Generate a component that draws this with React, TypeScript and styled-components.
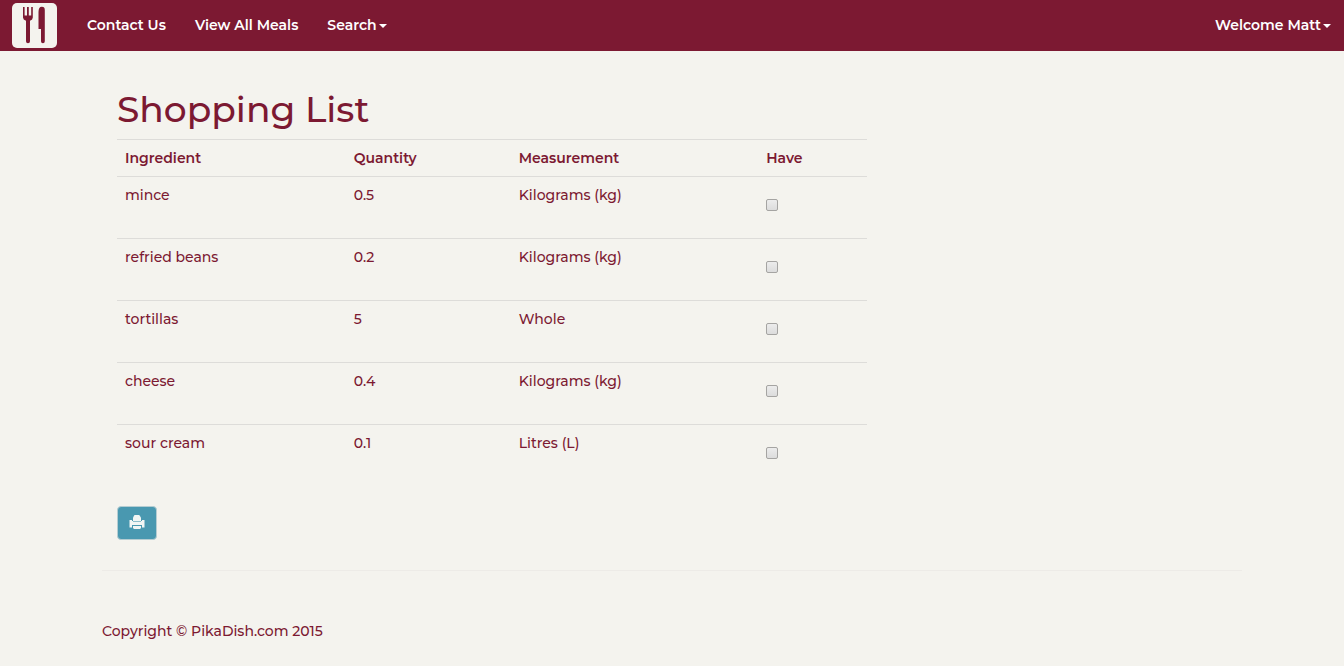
import React from "react";
import styled, { createGlobalStyle } from "styled-components";

const wine = "#7c1932";
const paper = "#f4f3ee";

const GlobalStyle = createGlobalStyle`
  *, *::before, *::after { box-sizing: border-box; }
  body {
    margin: 0;
    background: ${paper};
    color: ${wine};
    font-family: Montserrat, Inter, "Liberation Sans", sans-serif;
    font-size: 14px;
    font-weight: 500;
    line-height: 20px;
  }
`;

const Navbar = styled.nav`
  display: flex;
  align-items: center;
  height: 51px;
  padding: 0 13px 0 12px;
  background: ${wine};
`;

const Brand = styled.a`
  display: block;
  width: 45px;
  height: 45px;
  margin-right: 30px;
  border-radius: 5px;
  background: ${paper};

  svg { display: block; }
`;

const NavList = styled.ul`
  display: flex;
  flex: 1;
  gap: 29px;
  margin: 0;
  padding: 0;
  list-style: none;
`;

const navItem = `
  display: flex;
  align-items: center;
  gap: 2px;
  padding: 0 0 2px;
  border: 0;
  background: none;
  color: #fff;
  font: inherit;
  font-weight: 600;
  white-space: nowrap;
  text-decoration: none;
  cursor: pointer;
`;

const NavLink = styled.a`${navItem}`;
const NavMenuButton = styled.button`${navItem}`;

const Caret = styled.span`
  margin-top: 2px;
  border-top: 4px solid currentColor;
  border-left: 4px solid transparent;
  border-right: 4px solid transparent;
`;

const Container = styled.div`
  width: 100%;
  max-width: 1170px;
  margin: 0 auto;
  padding: 0 15px;
`;

const ListSection = styled.main`
  max-width: 780px;
  padding: 38px 15px 0;
`;

const Title = styled.h1`
  margin: 0 0 10px;
  font-size: 36px;
  font-weight: 500;
  line-height: 40px;
`;

const Table = styled.table`
  width: 100%;
  margin-bottom: 20px;
  border-collapse: separate;
  border-spacing: 0;
  table-layout: fixed;
`;

const Column = styled.col<{ $width: string }>`
  width: ${({ $width }) => $width};
`;

const HeadCell = styled.th`
  padding: 8px;
  border-top: 1px solid #dddcd9;
  font-weight: 600;
  text-align: left;
`;

const Cell = styled.td`
  padding: 8px;
  border-top: 1px solid #dddcd9;
  vertical-align: top;
`;

const CheckField = styled.label`
  display: block;
  height: 45px;
  padding-top: 14px;
`;

const Checkbox = styled.input`
  appearance: none;
  display: block;
  width: 12px;
  height: 12px;
  margin: 0;
  border: 1px solid #a5a4a2;
  border-radius: 2px;
  background: linear-gradient(#ececec, #dcdcdc);

  &:checked { background: ${wine}; }
`;

const PrintButton = styled.button`
  display: flex;
  align-items: center;
  justify-content: center;
  width: 40px;
  height: 34px;
  padding: 0;
  border: 1px solid #b5cdd2;
  border-radius: 4px;
  background: #4998b0;
  color: #fff;
  cursor: pointer;
`;

const Divider = styled.hr`
  width: 100%;
  margin: 30px 0 50px;
  border: 0;
  border-top: 1px solid #edebe7;
`;

const Footer = styled.footer`
  padding-bottom: 24px;
`;

const items = [
  { name: "mince", quantity: "0.5", unit: "Kilograms (kg)" },
  { name: "refried beans", quantity: "0.2", unit: "Kilograms (kg)" },
  { name: "tortillas", quantity: "5", unit: "Whole" },
  { name: "cheese", quantity: "0.4", unit: "Kilograms (kg)" },
  { name: "sour cream", quantity: "0.1", unit: "Litres (L)" },
];

const CutleryLogo = () => (
  <svg width="45" height="45" viewBox="0 0 45 45" fill={wine} aria-hidden="true">
    <path d="M11 4h1.600v8.500h2.400V4h1.800v8.500h2.400V4h1.600v10.500q0 2.300-2.800 3.200v20.500a2 2 0 0 1-4 0V17.700q-3-.9-3-3.200z" />
    <path d="M26.500 9q0-5.200 3.400-5.200 2.900 0 2.900 3.200v31.300a1.900 1.900 0 0 1-3.800 0V26h-2.500z" />
  </svg>
);

const PrintIcon = () => (
  <svg width="16" height="16" viewBox="0 0 16 16" aria-hidden="true">
    <path fill="#f1f5f4" d="M4 2.500L5.500 0h4.700L12 2.500V6H4z" />
    <path fill="#f1f5f4" d="M.5 5H3v2h10V5h2.500v7.500H13V10H3v2.500H.5z" />
    <path fill="#f1f5f4" d="M3 6h10v4H3z" />
    <path fill="#8ebdc9" d="M4 6h8v1H4z" />
    <path fill="#f1f5f4" d="M4 11h8v2l-1 1H5l-1-1z" />
  </svg>
);

export default function App() {
  return (
    <>
      <GlobalStyle />
      <Navbar>
        <Brand href="#" aria-label="PikaDish home"><CutleryLogo /></Brand>
        <NavList>
          <li><NavLink href="#contact">Contact Us</NavLink></li>
          <li><NavLink href="#meals">View All Meals</NavLink></li>
          <li><NavMenuButton type="button">Search<Caret /></NavMenuButton></li>
        </NavList>
        <NavMenuButton type="button">Welcome Matt<Caret /></NavMenuButton>
      </Navbar>
      <Container>
        <ListSection>
          <Title>Shopping List</Title>
          <Table>
            <colgroup>
              <Column $width="30.5%" />
              <Column $width="22%" />
              <Column $width="33%" />
              <Column $width="14.5%" />
            </colgroup>
            <thead>
              <tr>
                <HeadCell scope="col">Ingredient</HeadCell>
                <HeadCell scope="col">Quantity</HeadCell>
                <HeadCell scope="col">Measurement</HeadCell>
                <HeadCell scope="col">Have</HeadCell>
              </tr>
            </thead>
            <tbody>
              {items.map((item) => (
                <tr key={item.name}>
                  <Cell>{item.name}</Cell>
                  <Cell>{item.quantity}</Cell>
                  <Cell>{item.unit}</Cell>
                  <Cell>
                    <CheckField>
                      <Checkbox type="checkbox" aria-label={`Have ${item.name}`} />
                    </CheckField>
                  </Cell>
                </tr>
              ))}
            </tbody>
          </Table>
          <PrintButton type="button" aria-label="Print"><PrintIcon /></PrintButton>
        </ListSection>
        <Divider />
        <Footer>Copyright © PikaDish.com 2015</Footer>
      </Container>
    </>
  );
}
